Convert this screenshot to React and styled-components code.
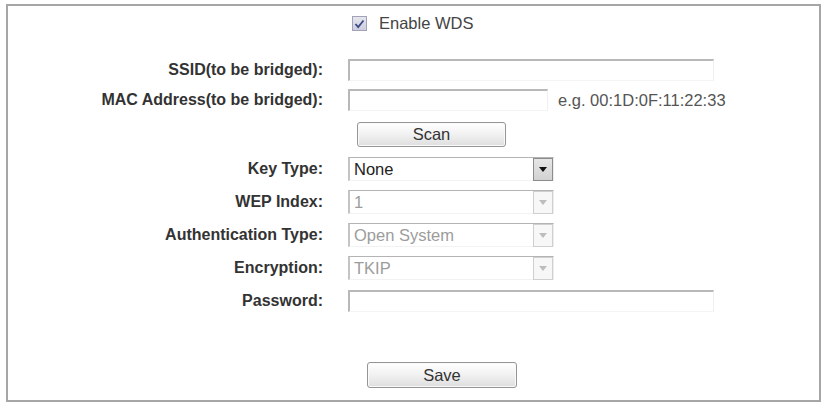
import React from "react";
import styled, { createGlobalStyle } from "styled-components";

const GlobalStyle = createGlobalStyle`
  html, body {
    margin: 0;
    padding: 0;
    background: #fff;
  }
  body {
    font-family: "Liberation Sans", Arial, sans-serif;
  }
`;

const Frame = styled.div`
  box-sizing: border-box;
  margin: 4px 0 0 6px;
  width: 815px;
  height: 398px;
  border: 2px solid #a6a6a6;
  display: flex;
  flex-direction: column;
`;

const Row = styled.div`
  display: grid;
  grid-template-columns: 315px 1fr;
  column-gap: 25px;
  align-items: center;
  height: ${(p) => p.$h || 24}px;
  margin-top: ${(p) => p.$top || 0}px;
`;

const Label = styled.label`
  justify-self: end;
  font-size: 16px;
  font-weight: bold;
  color: #333;
  white-space: nowrap;
`;

const Field = styled.div`
  display: flex;
  align-items: center;
  padding-left: ${(p) => p.$indent || 0}px;
`;

const CheckBox = styled.span`
  box-sizing: border-box;
  width: 15px;
  height: 15px;
  border: 1px solid #a2a2b8;
  background: linear-gradient(#e6e6ef, #cdcddd);
  display: flex;
  align-items: center;
  justify-content: center;
  margin-right: 12px;
`;

const Text = styled.span`
  font-size: 16.5px;
  color: ${(p) => p.$color || "#444"};
  margin-left: ${(p) => p.$ml || 0}px;
  white-space: nowrap;
`;

const TextInput = styled.input`
  box-sizing: border-box;
  width: ${(p) => p.$w}px;
  height: 22px;
  border: none;
  border-top: 2px solid #b8b8b8;
  border-left: 2px solid #b8b8b8;
  border-right: 1px solid #f0f0f0;
  border-bottom: 1px solid #f4f4f4;
  outline: none;
  padding: 0 4px;
  font: inherit;
  background: #fff;
`;

const Select = styled.div`
  box-sizing: border-box;
  width: 206px;
  height: 24px;
  display: flex;
  align-items: center;
  justify-content: space-between;
  border-top: 1px solid #b4b4b4;
  border-left: 2px solid #c4c4c4;
  border-right: 1px solid #eeeeee;
  border-bottom: 1px solid #f2f2f2;
  padding-left: 4px;
  font-size: 16.5px;
  color: ${(p) => (p.$disabled ? "#9c9c9c" : "#222")};
`;

const ArrowBox = styled.span`
  box-sizing: border-box;
  width: 20px;
  height: 23px;
  display: flex;
  align-items: center;
  justify-content: center;
  border: 1px solid ${(p) => (p.$disabled ? "#cfcfcf" : "#8c8c8c")};
  background: ${(p) =>
    p.$disabled ? "#f7f7f7" : "linear-gradient(#e6e6e6, #d2d2d2)"};
`;

const Button = styled.button`
  box-sizing: border-box;
  width: ${(p) => p.$w}px;
  height: ${(p) => p.$h}px;
  border: 1px solid #959595;
  border-radius: 3px;
  background: linear-gradient(#ffffff, #f1f1f1 50%, #dedede);
  box-shadow: inset 0 0 0 1px #fafafa;
  font-family: "Liberation Sans", Arial, sans-serif;
  font-size: 16.5px;
  color: #333;
  padding: 0;
`;

function Arrow({ disabled }) {
  return (
    <ArrowBox $disabled={disabled}>
      <svg width="8" height="5" viewBox="0 0 8 5">
        <path d="M0 0 L8 0 L4 5 Z" fill={disabled ? "#bdbdbd" : "#111"} />
      </svg>
    </ArrowBox>
  );
}

function Dropdown({ value, disabled }) {
  return (
    <Select $disabled={disabled}>
      <span>{value}</span>
      <Arrow disabled={disabled} />
    </Select>
  );
}

export default function App() {
  return (
    <>
      <GlobalStyle />
      <Frame>
        <Row $top={8} $h={18}>
          <span />
          <Field $indent={4}>
            <CheckBox>
              <svg width="11" height="10" viewBox="0 0 11 10">
                <path
                  d="M1.5 5 L4.2 8 L9.5 1.5"
                  fill="none"
                  stroke="#3b4a86"
                  strokeWidth="1.8"
                />
              </svg>
            </CheckBox>
            <Text>Enable WDS</Text>
          </Field>
        </Row>

        <Row $top={26}>
          <Label>SSID(to be bridged):</Label>
          <Field>
            <TextInput $w={366} />
          </Field>
        </Row>

        <Row $top={6}>
          <Label>MAC Address(to be bridged):</Label>
          <Field>
            <TextInput $w={200} />
            <Text $color="#555" $ml={10}>
              e.g. 00:1D:0F:11:22:33
            </Text>
          </Field>
        </Row>

        <Row $top={10} $h={25}>
          <span />
          <Field $indent={9}>
            <Button $w={149} $h={25}>Scan</Button>
          </Field>
        </Row>

        <Row $top={10}>
          <Label>Key Type:</Label>
          <Field>
            <Dropdown value="None" />
          </Field>
        </Row>

        <Row $top={9}>
          <Label>WEP Index:</Label>
          <Field>
            <Dropdown value="1" disabled />
          </Field>
        </Row>

        <Row $top={9}>
          <Label>Authentication Type:</Label>
          <Field>
            <Dropdown value="Open System" disabled />
          </Field>
        </Row>

        <Row $top={9}>
          <Label>Encryption:</Label>
          <Field>
            <Dropdown value="TKIP" disabled />
          </Field>
        </Row>

        <Row $top={9}>
          <Label>Password:</Label>
          <Field>
            <TextInput $w={366} />
          </Field>
        </Row>

        <Row $top={49} $h={26}>
          <span />
          <Field $indent={19}>
            <Button $w={150} $h={26}>Save</Button>
          </Field>
        </Row>
      </Frame>
    </>
  );
}
